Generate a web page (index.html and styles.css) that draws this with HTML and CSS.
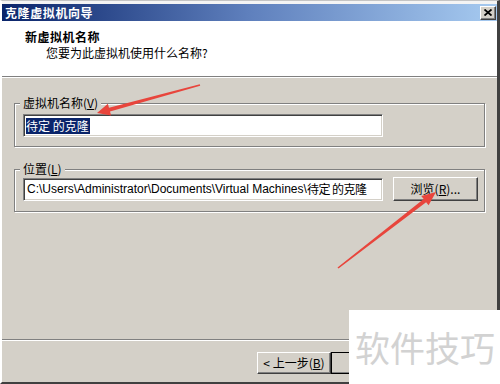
FILE: index.html
```html
<!DOCTYPE html>
<html lang="zh-CN">
<head>
<meta charset="utf-8">
<title>克隆虚拟机向导</title>
<link rel="stylesheet" href="styles.css">
</head>
<body>
<div class="window">
  <div class="titlebar">
    <span class="title">克隆虚拟机向导</span>
    <span class="close"><svg width="8" height="7" viewBox="0 0 8 7"><path d="M0.5 0.5 L7.5 6.5 M7.5 0.5 L0.5 6.5" stroke="#000" stroke-width="1.8" fill="none"/></svg></span>
  </div>
  <div class="header">
    <div class="h-title">新虚拟机名称</div>
    <div class="h-sub">您要为此虚拟机使用什么名称?</div>
  </div>
  <div class="content">
    <fieldset class="group g1">
      <legend>虚拟机名称(<u>V</u>)</legend>
      <div class="textbox name"><span class="sel">待定 的克隆</span></div>
    </fieldset>
    <fieldset class="group g2">
      <legend>位置(<u>L</u>)</legend>
      <div class="row">
        <div class="textbox path">C:\Users\Administrator\Documents\Virtual Machines\<span class="cjk">待定 的克隆</span></div>
        <button class="btn browse">浏览(<u>R</u>)...</button>
      </div>
    </fieldset>
  </div>
  <div class="footer">
    <div class="buttons">
      <button class="btn nav">&lt; 上一步(<u>B</u>)</button>
      <button class="btn nav default" aria-label="下一步"></button>
      <button class="btn nav cancel" aria-label="取消"></button>
    </div>
  </div>
</div>
<div class="watermark">软件技巧</div>
<svg class="arrows" width="500" height="384" viewBox="0 0 500 384">
  <polygon fill="#e8453c" points="199.8,84.3 109.0,107.7 107.9,103.8 97,113 111.1,115.4 110.0,111.5 200.2,85.7"/>
  <polygon fill="#e8453c" points="338.5,268.6 426.1,202.2 428.6,205.3 436,192 421.2,195.9 423.7,199.0 337.5,267.4"/>
</svg>
</body>
</html>
```
FILE: styles.css
```css
html, body {
  margin: 0;
  padding: 0;
}
body {
  width: 500px;
  height: 384px;
  overflow: hidden;
  position: relative;
  background: #d4d0c8;
  font-family: "Liberation Sans", "Noto Sans CJK SC", sans-serif;
  font-size: 12px;
  color: #000;
}
.window {
  box-sizing: border-box;
  height: 384px;
  display: flex;
  flex-direction: column;
  background: #d4d0c8;
  border-top: 1px solid #c4c4c4;
  border-left: 2px solid #ffffff;
  border-right: 3px solid #404040;
  border-bottom: 2px solid #404040;
}
.titlebar {
  height: 17px;
  border-top: 3px solid #f4f4f4;
  background: linear-gradient(to right, #0a246a 0%, #5f80bd 50%, #a6caf0 100%);
  display: flex;
  align-items: center;
  justify-content: space-between;
}
.title {
  color: #fff;
  font-family: "Noto Sans CJK SC", sans-serif;
  font-weight: bold;
  font-size: 12px;
  line-height: 17px;
  padding-left: 3px;
  letter-spacing: 0.6px;
}
.close {
  box-sizing: border-box;
  width: 16px;
  height: 14px;
  margin-right: 1px;
  background: #d4d0c8;
  border: 1px solid;
  border-color: #fff #404040 #404040 #fff;
  box-shadow: inset -1px -1px 0 #808080;
  display: flex;
  align-items: center;
  justify-content: center;
}
.header {
  height: 56px;
  box-sizing: border-box;
  background: #fff;
  padding: 8px 0 0 23px;
  border-bottom: 1px solid #808080;
  box-shadow: 0 1px 0 #fff;
  font-family: "Noto Sans CJK SC", sans-serif;
}
.h-title {
  font-weight: bold;
  line-height: 16px;
  letter-spacing: 0.5px;
}
.h-sub {
  line-height: 16px;
  padding-left: 21px;
}
.content {
  flex: 1;
  padding: 18px 12px 0 12px;
  margin-top: 1px;
  font-family: "Noto Sans CJK SC", sans-serif;
}
.group {
  margin: 0;
  padding: 4px 6px 9px 8px;
  border: 1px solid #808080;
  box-shadow: inset 1px 1px 0 #fff, 1px 1px 0 #fff;
  min-width: 0;
}
.group legend {
  padding: 0 3px;
  margin-left: -3px;
  line-height: 14px;
  background: #d4d0c8;
}
.g2 {
  margin-top: 15px;
  padding-top: 1px;
  padding-bottom: 10px;
}
.textbox {
  box-sizing: border-box;
  height: 23px;
  width: 360px;
  background: #fff;
  border: 1px solid;
  border-color: #808080 #fff #fff #808080;
  box-shadow: inset 1px 1px 0 #404040, inset -1px -1px 0 #d4d0c8;
  padding: 0 2px;
  display: flex;
  align-items: center;
  white-space: pre;
  overflow: hidden;
  line-height: 16px;
}
.sel {
  background: #0a246a;
  color: #fff;
  padding: 0 1px 0 0;
}
.path {
  font-family: "Liberation Sans", "Noto Sans CJK SC", sans-serif;
  padding-left: 3px;
}
.cjk {
  font-family: "Noto Sans CJK SC", sans-serif;
  letter-spacing: -0.5px;
}
.row {
  display: flex;
  align-items: center;
  gap: 10px;
}
.btn {
  box-sizing: border-box;
  margin: 0;
  background: #d4d0c8;
  border: 1px solid;
  border-color: #fff #404040 #404040 #fff;
  box-shadow: inset -1px -1px 0 #808080;
  font-family: "Noto Sans CJK SC", sans-serif;
  font-size: 12px;
  color: #000;
  padding: 0;
  line-height: 14px;
}
.browse {
  width: 85px;
  height: 24px;
}
.footer {
  border-top: 1px solid #808080;
}
.buttons {
  border-top: 1px solid #fff;
  display: flex;
  justify-content: flex-end;
  padding: 11px 10px 8px 0;
}
.nav {
  width: 74px;
  height: 22px;
}
.default {
  border-color: #000;
}
.cancel {
  width: 75px;
  margin-left: 7px;
}
.watermark {
  position: absolute;
  left: 349px;
  top: 310px;
  width: 151px;
  height: 74px;
  box-sizing: border-box;
  background: #fff;
  color: #d2d2d2;
  font-family: "Noto Sans CJK SC", sans-serif;
  font-size: 35px;
  line-height: 74px;
  padding-left: 6px;
  white-space: nowrap;
}
.arrows {
  position: absolute;
  left: 0;
  top: 0;
}
```
